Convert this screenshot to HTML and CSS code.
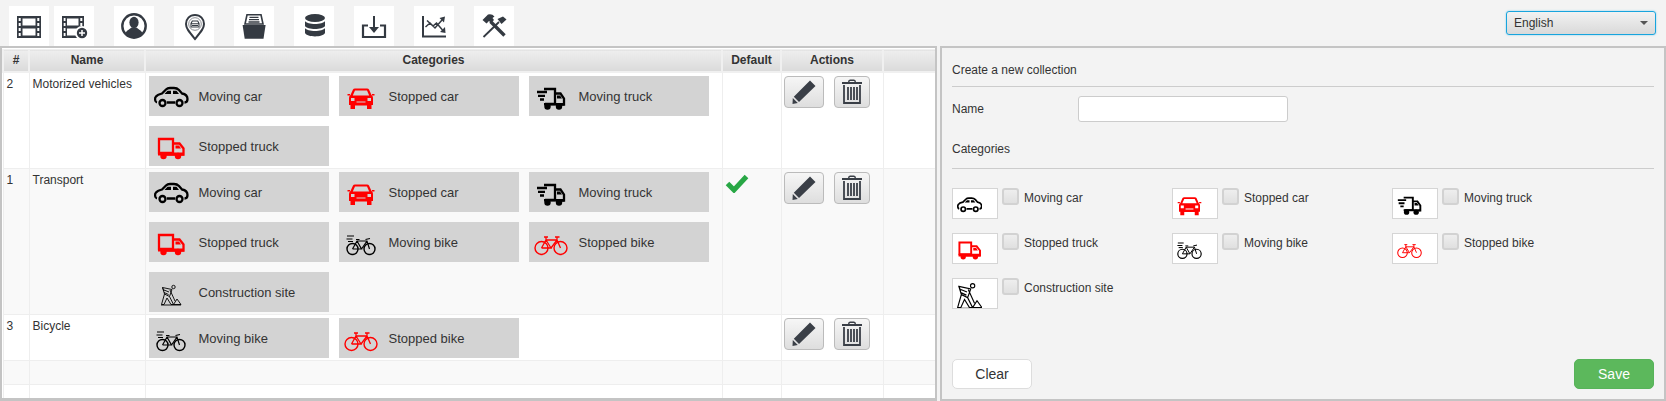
FILE: index.html
```html
<!DOCTYPE html>
<html lang="en">
<head>
    <meta charset="UTF-8">
    <meta name="viewport" content="width=device-width, initial-scale=1.0">
    <title>Collections</title>
    <link rel="stylesheet" href="styles.css">
</head>
<body>
    <!-- shared icon shapes -->
    <svg class="sprite" aria-hidden="true">
        <defs>
            <g id="film"><path fill-rule="evenodd" d="M8 10H32V32H8ZM13.5 12.5V19.5H26.5V12.5ZM13.5 22.5V29.5H26.5V22.5ZM9.7 12V15H11.7V12ZM9.7 17V20H11.7V17ZM9.7 22V25H11.7V22ZM9.7 27V30H11.7V27ZM28.3 12V15H30.3V12ZM28.3 17V20H30.3V17ZM28.3 22V25H30.3V22ZM28.3 27V30H30.3V27Z"/></g>
            <g id="film-add"><path fill-rule="evenodd" d="M8 10H30V32H8ZM13 12.5V19.5H24.5V12.5ZM13 22.5V29.5H24.5V22.5ZM9.7 12V15H11.5V12ZM9.7 17V20H11.5V17ZM9.7 22V25H11.5V22ZM9.7 27V30H11.5V27ZM26.3 12V15H28.3V12ZM26.3 17V20H28.3V17Z"/><circle cx="28" cy="27" r="7" fill="#fff"/><circle cx="28" cy="27" r="5.2"/><path d="M25 27H31M28 24V30" stroke="#fff" stroke-width="1.5"/></g>
            <g id="user"><circle cx="20" cy="20" r="11.7" fill="none" stroke="currentColor" stroke-width="2.4"/><ellipse cx="20" cy="16.5" rx="4.6" ry="5.8"/><path d="M11.5 27.5C12 24.5 15 24 17.5 21.5H22.5C25 24 28 24.5 28.5 27.5A10.7 10.7 0 0 1 11.5 27.5Z"/></g>
            <g id="pin"><path d="M21 9C15.5 9 12 13 12 18C12 22 14.5 25 21 33C27.5 25 30 22 30 18C30 13 26.5 9 21 9Z" fill="none" stroke="currentColor" stroke-width="2"/><circle cx="21" cy="18" r="6.3" fill="none" stroke="#8a8d92" stroke-width="1"/><path d="M17 21V17.5L18.3 15H23.7L25 17.5V21ZM17 17.7H25M18 19.5H24" fill="none" stroke="currentColor" stroke-width="1.1"/></g>
            <g id="archive"><path d="M8.6 19H31.6L29.5 32.7H10.7Z"/><path d="M13 8.8H27L29 18H11Z" fill="none" stroke="currentColor" stroke-width="1.6"/><path d="M15.5 11.3H24.5M15 13.6H25M14.5 16H25.5" stroke="currentColor" stroke-width="1.3"/></g>
            <g id="database"><ellipse cx="21" cy="12" rx="10" ry="4"/><path d="M11 15C13 19 29 19 31 15V20C29 24 13 24 11 20Z"/><path d="M11 22C13 26 29 26 31 22V27C29 31.500 13 31.500 11 27Z"/></g>
            <g id="import"><path d="M14 19.500H9V31H31V19.500H26" fill="none" stroke="currentColor" stroke-width="2.2"/><path d="M20 10V23" stroke="currentColor" stroke-width="2"/><path d="M15 21H25L20 27Z"/></g>
            <g id="chart"><path d="M9 10V30.500H32" fill="none" stroke="currentColor" stroke-width="2"/><path d="M11.500 21L16 17L21 22L28 14M13 14.500L19 20L22.500 17L28.500 24" fill="none" stroke="currentColor" stroke-width="1.5"/><path d="M31 10.500L25.500 12L30 16.500ZM31.500 27L31 21L26 26Z"/></g>
            <g id="tools"><path d="M8.500 14L14 8.500Q18 7.500 20.500 10.500L18.500 12L20 14L17 17L15 15L12.500 17.500Z"/><path d="M16.500 15.500L30.500 29.500" stroke="currentColor" stroke-width="3.400"/><path d="M25 16L9.500 31" stroke="currentColor" stroke-width="1.800"/><path d="M23.500 13L29 10.500L32.500 13.500L27.500 18Z"/></g>

            <g id="car-moving"><path d="M4 19.500C1.800 19 1.500 15 3 13.500C4 12 7 11 9 10.500L13 6.500Q14.500 5 17 5H21Q24 5 26 7L29 10.500C32 11 34.500 13 34.500 16C34.500 18.500 33.500 19.500 31.500 19.500M14 19.500H22" fill="none" stroke="currentColor" stroke-width="2.300"/><circle cx="9.500" cy="20" r="3" fill="none" stroke="currentColor" stroke-width="2.300"/><circle cx="26.500" cy="20" r="3" fill="none" stroke="currentColor" stroke-width="2.300"/><path d="M11.500 11L14.500 7.800H18V11ZM20 7.800H23.500L26 11H20Z"/></g>
            <g id="car-stopped"><path fill-rule="evenodd" d="M10 6.500Q10.500 5.500 12 5.500H24Q25.500 5.500 26 6.500L28.500 12Q30 13 30 15V22H28.500V26H24V22.500H12V26H7.500V22H6V15Q6 13 7.500 12ZM12 7.500L9.800 12.500H26.200L24 7.500ZM8 15V18H11.500V15ZM24.500 15V18H28V15ZM13.500 18.500V19.500H22.500V18.500Z"/><path d="M4.500 11H7V12.500H4.500ZM29 11H31.500V12.500H29Z"/></g>
            <g id="truck-moving"><path d="M11 6H22V21H12M22 10.500H27.500L31 15.500V21.500H29M4 9H14M5 12.800H12M7 16.500H11" fill="none" stroke="currentColor" stroke-width="2.300"/><path d="M24 12.500H27L29 15.500H24ZM11 20H31V22.500H11Z"/><circle cx="14.500" cy="23.500" r="3.200"/><circle cx="26" cy="23.500" r="3.200"/></g>
            <g id="truck-stopped"><path d="M6 6H20V20H6ZM20 10.500H26.500L30.500 15.500V21.500H8" fill="none" stroke="currentColor" stroke-width="2.300"/><path d="M22.500 12.500H26L28 15.500H22.500ZM5 19.500H31V22.500H5Z"/><circle cx="10.500" cy="23" r="3.200"/><circle cx="25" cy="23" r="3.200"/></g>
            <g id="bike-moving"><circle cx="9.500" cy="20" r="5.500" fill="none" stroke="currentColor" stroke-width="1.400"/><circle cx="26.500" cy="20" r="5.500" fill="none" stroke="currentColor" stroke-width="1.400"/><path d="M9.500 20L14 12H24L26.500 20M14 12L18.500 20H9.500M18.500 20L24 12M13 10.500H16.500M22.500 10.500L27 9.500M4 7H11M3.500 10H9.500M5 12.500H10" fill="none" stroke="currentColor" stroke-width="1.200"/></g>
            <g id="bike-stopped"><circle cx="8.500" cy="19" r="6.500" fill="none" stroke="currentColor" stroke-width="1.400"/><circle cx="27.500" cy="19" r="6.500" fill="none" stroke="currentColor" stroke-width="1.400"/><path d="M8.500 19L13 11H24L27.500 19M13 11L18 19H8.500M18 19L24 11M11 8H15M13 8V11M22 8H26.500M24 8V11" fill="none" stroke="currentColor" stroke-width="1.300"/></g>
            <g id="worker"><circle cx="20.500" cy="8" r="1.700" fill="none" stroke="currentColor" stroke-width="0.900"/><path d="M9.500 8.500L19 10.500L16.500 17.500L11.500 15ZM11.500 15L8.500 25.500H11L14 19L18 25.500H20.500L16.500 17.500M9.500 8.500L11 12M17 11L22 22M20.500 25.500L24 20L28 25.500ZM8 26H28M11 11L16 13M11 13.500L15.500 15.500" fill="none" stroke="currentColor" stroke-width="0.900"/></g>
        </defs>
    </svg>

    <div class="toolbar">
        <a class="tool"><svg viewBox="0 0 40 40"><use href="#film"/></svg></a>
        <a class="tool tool-near"><svg viewBox="0 0 40 40"><use href="#film-add"/></svg></a>
        <a class="tool"><svg viewBox="0 0 40 40"><use href="#user"/></svg></a>
        <a class="tool"><svg viewBox="0 0 40 40"><use href="#pin"/></svg></a>
        <a class="tool"><svg viewBox="0 0 40 40"><use href="#archive"/></svg></a>
        <a class="tool"><svg viewBox="0 0 40 40"><use href="#database"/></svg></a>
        <a class="tool"><svg viewBox="0 0 40 40"><use href="#import"/></svg></a>
        <a class="tool"><svg viewBox="0 0 40 40"><use href="#chart"/></svg></a>
        <a class="tool"><svg viewBox="0 0 40 40"><use href="#tools"/></svg></a>
        <div class="lang"><span>English</span><i class="caret"></i></div>
    </div>

    <div class="main">
        <div class="list">
            <table class="grid">
                <colgroup>
                    <col class="col-id"><col class="col-name"><col class="col-cats"><col class="col-default"><col class="col-actions"><col class="col-rest">
                </colgroup>
                <thead>
                    <tr><th>#</th><th>Name</th><th>Categories</th><th>Default</th><th>Actions</th><th></th></tr>
                </thead>
                <tbody>
                    <tr>
                        <td>2</td>
                        <td>Motorized vehicles</td>
                        <td>
                            <div class="chips">
                                <div class="chip"><svg class="ico black" viewBox="0 0 36 28"><use href="#car-moving"/></svg>Moving car</div>
                                <div class="chip"><svg class="ico red" viewBox="0 0 36 28"><use href="#car-stopped"/></svg>Stopped car</div>
                                <div class="chip"><svg class="ico black" viewBox="0 0 36 28"><use href="#truck-moving"/></svg>Moving truck</div>
                                <div class="chip"><svg class="ico red" viewBox="0 0 36 28"><use href="#truck-stopped"/></svg>Stopped truck</div>
                            </div>
                        </td>
                        <td></td>
                        <td>
                            <div class="actions">
                                <button class="act act-edit"><svg viewBox="0 0 24 24"><path d="M18 0.500L23.500 6L7 22L1.800 16.800ZM0.800 18L5.800 23L0.500 24Z"/></svg></button>
                                <button class="act act-del"><svg viewBox="0 0 20 25"><path d="M0 3H20V5H0ZM6 3Q6 0.500 8 0.500H12Q14 0.500 14 3H12.500Q12.500 2 12 2H8Q7.500 2 7.500 3Z"/><path d="M2 6V24H18V6M6 8V21M9 8V21M12 8V21M15 8V21" fill="none" stroke="currentColor" stroke-width="1.800"/></svg></button>
                            </div>
                        </td>
                        <td></td>
                    </tr>
                    <tr>
                        <td>1</td>
                        <td>Transport</td>
                        <td>
                            <div class="chips">
                                <div class="chip"><svg class="ico black" viewBox="0 0 36 28"><use href="#car-moving"/></svg>Moving car</div>
                                <div class="chip"><svg class="ico red" viewBox="0 0 36 28"><use href="#car-stopped"/></svg>Stopped car</div>
                                <div class="chip"><svg class="ico black" viewBox="0 0 36 28"><use href="#truck-moving"/></svg>Moving truck</div>
                                <div class="chip"><svg class="ico red" viewBox="0 0 36 28"><use href="#truck-stopped"/></svg>Stopped truck</div>
                                <div class="chip"><svg class="ico black" viewBox="0 0 36 28"><use href="#bike-moving"/></svg>Moving bike</div>
                                <div class="chip"><svg class="ico red" viewBox="0 0 36 28"><use href="#bike-stopped"/></svg>Stopped bike</div>
                                <div class="chip"><svg class="ico black" viewBox="0 0 36 28"><use href="#worker"/></svg>Construction site</div>
                            </div>
                        </td>
                        <td><svg class="check" viewBox="0 0 24 20"><path d="M2.500 10.500L9 17L21.500 3.500" fill="none" stroke="currentColor" stroke-width="5"/></svg></td>
                        <td>
                            <div class="actions">
                                <button class="act act-edit"><svg viewBox="0 0 24 24"><path d="M18 0.500L23.500 6L7 22L1.800 16.800ZM0.800 18L5.800 23L0.500 24Z"/></svg></button>
                                <button class="act act-del"><svg viewBox="0 0 20 25"><path d="M0 3H20V5H0ZM6 3Q6 0.500 8 0.500H12Q14 0.500 14 3H12.500Q12.500 2 12 2H8Q7.500 2 7.500 3Z"/><path d="M2 6V24H18V6M6 8V21M9 8V21M12 8V21M15 8V21" fill="none" stroke="currentColor" stroke-width="1.800"/></svg></button>
                            </div>
                        </td>
                        <td></td>
                    </tr>
                    <tr>
                        <td>3</td>
                        <td>Bicycle</td>
                        <td>
                            <div class="chips">
                                <div class="chip"><svg class="ico black" viewBox="0 0 36 28"><use href="#bike-moving"/></svg>Moving bike</div>
                                <div class="chip"><svg class="ico red" viewBox="0 0 36 28"><use href="#bike-stopped"/></svg>Stopped bike</div>
                            </div>
                        </td>
                        <td></td>
                        <td>
                            <div class="actions">
                                <button class="act act-edit"><svg viewBox="0 0 24 24"><path d="M18 0.500L23.500 6L7 22L1.800 16.800ZM0.800 18L5.800 23L0.500 24Z"/></svg></button>
                                <button class="act act-del"><svg viewBox="0 0 20 25"><path d="M0 3H20V5H0ZM6 3Q6 0.500 8 0.500H12Q14 0.500 14 3H12.500Q12.500 2 12 2H8Q7.500 2 7.500 3Z"/><path d="M2 6V24H18V6M6 8V21M9 8V21M12 8V21M15 8V21" fill="none" stroke="currentColor" stroke-width="1.800"/></svg></button>
                            </div>
                        </td>
                        <td></td>
                    </tr>
                    <tr class="row-empty"><td></td><td></td><td></td><td></td><td></td><td></td></tr>
                    <tr class="row-empty"><td></td><td></td><td></td><td></td><td></td><td></td></tr>
                </tbody>
            </table>
        </div>

        <div class="editor">
            <div class="section-title">Create a new collection</div>
            <div class="name-row">
                <label class="name-label" for="collection_name">Name</label>
                <input class="name-input" type="text" id="collection_name">
            </div>
            <div class="section-title section-cats">Categories</div>
            <div class="picks">
                <label class="pick"><span class="tile"><svg class="tile-ico black" viewBox="1 2 34 26"><use href="#car-moving"/></svg></span><input type="checkbox"><span>Moving car</span></label>
                <label class="pick"><span class="tile"><svg class="tile-ico red" viewBox="4 3 28 24"><use href="#car-stopped"/></svg></span><input type="checkbox"><span>Stopped car</span></label>
                <label class="pick"><span class="tile"><svg class="tile-ico black" viewBox="3 3 30 25"><use href="#truck-moving"/></svg></span><input type="checkbox"><span>Moving truck</span></label>
                <label class="pick"><span class="tile"><svg class="tile-ico red" viewBox="4 3 28 25"><use href="#truck-stopped"/></svg></span><input type="checkbox"><span>Stopped truck</span></label>
                <label class="pick"><span class="tile"><svg class="tile-ico black" viewBox="3 4 30 24"><use href="#bike-moving"/></svg></span><input type="checkbox"><span>Moving bike</span></label>
                <label class="pick"><span class="tile"><svg class="tile-ico red" viewBox="1 4 34 24"><use href="#bike-stopped"/></svg></span><input type="checkbox"><span>Stopped bike</span></label>
                <label class="pick"><span class="tile"><svg class="tile-worker black" viewBox="8 5 20 24"><use href="#worker"/></svg></span><input type="checkbox"><span>Construction site</span></label>
            </div>
            <div class="form-buttons">
                <button class="btn btn-clear">Clear</button>
                <button class="btn btn-save">Save</button>
            </div>
        </div>
    </div>
</body>
</html>
```

FILE: styles.css
```css
* {
    box-sizing: border-box;
}
html, body {
    height: 100%;
}
body {
    margin: 0;
    overflow: hidden;
    background-color: #f3f3f3;
    color: #333;
    font-family: "Liberation Sans", Arial, sans-serif;
    font-size: 12px;
}
.sprite {
    display: block;
    width: 0;
    height: 0;
}
.black {
    color: #000;
}
.red {
    color: #f00;
}

/* top bar */
.toolbar {
    display: flex;
    align-items: flex-start;
    height: 46px;
    padding: 6px 10px 0 9px;
}
.tool {
    display: block;
    width: 40px;
    height: 40px;
    margin-right: 20px;
    background-color: #fff;
    color: #343a42;
    fill: currentColor;
}
.tool:first-child {
    margin-right: 5px;
}
.tool svg {
    display: block;
    width: 40px;
    height: 40px;
}
.lang {
    display: flex;
    align-items: center;
    justify-content: space-between;
    width: 150px;
    height: 24px;
    margin: 5px 0 0 auto;
    padding: 0 7px;
    border: 1px solid #18a4dd;
    border-radius: 3px;
    background: linear-gradient(#f2f2f2, #d9d9d9);
    box-shadow: 0 0 2px #7ccbec;
}
.caret {
    width: 0;
    height: 0;
    border-left: 4px solid transparent;
    border-right: 4px solid transparent;
    border-top: 4px solid #555;
}

/* left table + right form */
.main {
    display: flex;
    height: 355px;
}
.list {
    width: 937px;
    height: 355px;
    overflow: hidden;
    border: 2px solid #c4c4c4;
    border-bottom-width: 3px;
    background-color: #fff;
}
.grid {
    width: 933px;
    border-collapse: collapse;
    table-layout: fixed;
    margin-top: 1px;
}
.col-id { width: 26px; }
.col-name { width: 116px; }
.col-cats { width: 577px; }
.col-default { width: 59px; }
.col-actions { width: 102px; }
.col-rest { width: 53px; }
.grid th {
    height: 22px;
    padding: 0;
    border: 2px solid #f0f0f0;
    border-top-width: 1px;
    background: linear-gradient(#eeeeee, #dadada);
    font-weight: bold;
    text-align: center;
    color: #333;
}
.grid td {
    padding: 3px 3px 2px;
    border: 1px solid #eee;
    vertical-align: top;
    line-height: 16px;
}
.grid tbody tr:nth-child(even) {
    background-color: #f9f9f9;
}
.grid .row-empty td {
    height: 24px;
}
.chips {
    display: flex;
    flex-wrap: wrap;
    gap: 10px;
}
.chip {
    display: flex;
    align-items: center;
    width: 180px;
    height: 40px;
    padding: 2px 0 0 4px;
    background-color: #d3d3d3;
    font-size: 13px;
}
.ico {
    width: 36px;
    height: 28px;
    margin-right: 10px;
    fill: currentColor;
}
.check {
    display: block;
    width: 24px;
    height: 20px;
    margin: 1px 0 0 -1px;
    color: #28a745;
}
.actions {
    display: flex;
    gap: 10px;
    margin-left: -1px;
}
.act {
    display: flex;
    align-items: center;
    justify-content: center;
    height: 32px;
    padding: 0;
    border: 1px solid #bbb;
    border-radius: 4px;
    background: linear-gradient(#f6f6f6, #dedede);
    color: #3a3f47;
    fill: currentColor;
}
.act-edit {
    width: 40px;
}
.act-edit svg {
    width: 24px;
    height: 24px;
}
.act-del {
    width: 36px;
}
.act-del svg {
    width: 20px;
    height: 25px;
}

.editor {
    display: flex;
    flex-direction: column;
    width: 726px;
    height: 355px;
    margin-left: 3px;
    padding: 0 10px 10px;
    border: 2px solid #c4c4c4;
}
.section-title {
    height: 39px;
    padding-top: 15px;
    border-bottom: 1px solid #ccc;
    line-height: 14px;
}
.name-row {
    display: flex;
    align-items: center;
    margin-top: 9px;
}
.name-label {
    width: 126px;
}
.name-input {
    width: 210px;
    height: 26px;
    border: 1px solid #ccc;
    border-radius: 3px;
    background-color: #fff;
}
.section-cats {
    height: 47px;
    padding-top: 20px;
}
.picks {
    display: grid;
    grid-template-columns: repeat(3, 220px);
    grid-auto-rows: 45px;
    margin-top: 19px;
}
.pick {
    display: flex;
    align-items: flex-start;
    line-height: 20px;
}
.tile {
    display: flex;
    align-items: center;
    justify-content: flex-start;
    width: 46px;
    height: 31px;
    overflow: hidden;
    padding: 4px 0 0 4px;
    border: 1px solid #d5d5d5;
    background-color: #fff;
}
.tile-ico {
    flex: none;
    width: 25px;
    height: 21px;
    fill: currentColor;
}
.tile-worker {
    flex: none;
    width: 25px;
    height: 30px;
    margin-top: 3px;
    fill: currentColor;
}
.pick input {
    appearance: none;
    width: 17px;
    height: 17px;
    margin: 0 5px 0 4px;
    border: 2px solid #d2d2d2;
    border-radius: 3px;
    background: linear-gradient(#eeeeee, #e0e0e0);
}
.form-buttons {
    display: flex;
    justify-content: space-between;
    margin-top: auto;
}
.btn {
    width: 80px;
    height: 30px;
    border-radius: 5px;
    font-family: inherit;
    font-size: 14px;
}
.btn-clear {
    border: 1px solid #ddd;
    background-color: #fff;
    color: #333;
}
.btn-save {
    border: 1px solid #57b35a;
    background-color: #5cb85c;
    color: #fff;
}
```
